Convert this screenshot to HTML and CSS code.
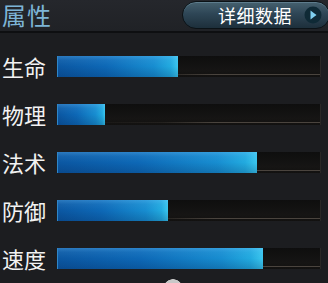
FILE: index.html
```html
<!DOCTYPE html>
<html>
<head>
<meta charset="utf-8">
<link rel="stylesheet" href="styles.css">
</head>
<body>
<div class="panel">
  <div class="header">
    <div class="title">属性</div>
    <div class="btn">
      <span class="btn-text">详细数据</span>
      <span class="btn-icon"><svg width="18" height="18" viewBox="0 0 18 18"><circle cx="9" cy="9" r="8.5" fill="#0f2a36"/><path d="M6.5 4.5 L12.5 9 L6.5 13.5 Z" fill="#7fd0f0"/></svg></span>
    </div>
  </div>
  <div class="rows">
    <div class="row"><span class="label">生命</span><div class="track"><div class="fill" style="width:121px"></div></div></div>
    <div class="row"><span class="label">物理</span><div class="track"><div class="fill" style="width:48px"></div></div></div>
    <div class="row"><span class="label">法术</span><div class="track"><div class="fill" style="width:200px"></div></div></div>
    <div class="row"><span class="label">防御</span><div class="track"><div class="fill" style="width:111px"></div></div></div>
    <div class="row"><span class="label">速度</span><div class="track"><div class="fill" style="width:206px"></div></div></div>
  </div>
  <div class="knob"></div>
</div>
</body>
</html>
```
FILE: styles.css
```css
* { box-sizing: border-box; }
html, body { margin: 0; padding: 0; }
body {
  width: 328px;
  height: 283px;
  overflow: hidden;
  background: #1c1d20;
  font-family: "Noto Sans CJK SC", "Noto Sans", sans-serif;
}
.panel {
  position: relative;
  width: 328px;
  height: 283px;
  overflow: hidden;
}
.header {
  height: 33px;
  display: flex;
  justify-content: space-between;
  align-items: flex-start;
  background: linear-gradient(#25272c, #202226);
  border-bottom: 2px solid #0e0f11;
}
.title {
  font-size: 24px;
  line-height: 30px;
  color: #7db4d6;
  padding-left: 2px;
  letter-spacing: 1px;
}
.btn {
  margin-top: 1px;
  width: 148px;
  height: 28px;
  margin-right: -2px;
  border-radius: 14px;
  background: linear-gradient(#46616f 0%, #2e4656 45%, #1d2f3b 100%);
  border: 1px solid #0b1216;
  box-shadow: inset 0 1px 0 rgba(140,180,200,0.35);
  display: flex;
  align-items: center;
  justify-content: flex-end;
  padding-right: 7px;
}
.btn-text {
  color: #ffffff;
  font-size: 18px;
  line-height: 24px;
  margin-right: 12px;
  letter-spacing: 0.5px;
}
.btn-icon {
  display: flex;
  width: 18px;
  height: 18px;
}
.rows {
  padding-top: 9px;
  display: flex;
  flex-direction: column;
}
.row {
  height: 48px;
  display: flex;
  align-items: center;
}
.label {
  width: 57px;
  padding-left: 2px;
  font-size: 22px;
  color: #f2f2f2;
  line-height: 26px;
}
.track {
  position: relative;
  width: 264px;
  height: 21px;
  background: linear-gradient(#0e0e0e, #161514 70%, #121110);
  border-right: 1px solid #2a2826;
}
.track::after {
  content: "";
  position: absolute;
  left: 0;
  right: 0;
  bottom: 2px;
  height: 1px;
  background: linear-gradient(90deg, rgba(70,64,58,0) 0%, rgba(70,64,58,0.3) 40%, #4a443e 60%, #4a443e 100%);
}
.fill {
  position: relative;
  z-index: 1;
  height: 100%;
  background:
    linear-gradient(rgba(120,200,255,0.3) 0%, rgba(120,200,255,0.1) 20%, rgba(0,0,0,0) 50%, rgba(0,20,60,0.2) 100%),
    linear-gradient(90deg, #0b57a2 0%, #0d68b6 40%, #178dd0 80%, #22aadf 94%, #3ac6ee 100%);
  border-left: 1px solid #2f86c8;
}
.knob {
  position: absolute;
  left: 163px;
  top: 279px;
  width: 20px;
  height: 4px;
  background: radial-gradient(circle at 50% 10px, #c8c8c8 9.5px, rgba(200,200,200,0) 10px);
}
```
